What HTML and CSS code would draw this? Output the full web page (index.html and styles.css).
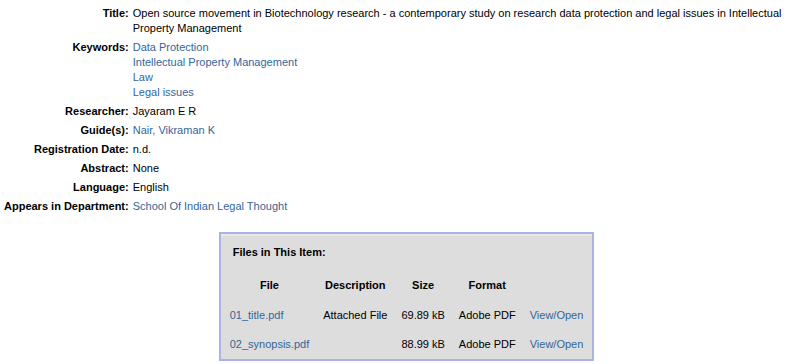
FILE: index.html
```html
<!DOCTYPE html>
<html lang="en">
<head>
    <meta charset="UTF-8">
    <title>Item Record</title>
    <link rel="stylesheet" href="styles.css">
</head>
<body>
    <table class="itemDisplayTable">
        <tr>
            <td class="metadataFieldLabel">Title:</td>
            <td class="metadataFieldValue">Open source movement in Biotechnology research - a contemporary study on research data protection and legal issues in Intellectual Property Management</td>
        </tr>
        <tr>
            <td class="metadataFieldLabel">Keywords:</td>
            <td class="metadataFieldValue">
                <a href="#">Data Protection</a><br>
                <a href="#">Intellectual Property Management</a><br>
                <a href="#">Law</a><br>
                <a href="#">Legal issues</a>
            </td>
        </tr>
        <tr>
            <td class="metadataFieldLabel">Researcher:</td>
            <td class="metadataFieldValue">Jayaram E R</td>
        </tr>
        <tr>
            <td class="metadataFieldLabel">Guide(s):</td>
            <td class="metadataFieldValue"><a href="#">Nair, Vikraman K</a></td>
        </tr>
        <tr>
            <td class="metadataFieldLabel">Registration Date:</td>
            <td class="metadataFieldValue">n.d.</td>
        </tr>
        <tr>
            <td class="metadataFieldLabel">Abstract:</td>
            <td class="metadataFieldValue">None</td>
        </tr>
        <tr>
            <td class="metadataFieldLabel">Language:</td>
            <td class="metadataFieldValue">English</td>
        </tr>
        <tr>
            <td class="metadataFieldLabel">Appears in Department:</td>
            <td class="metadataFieldValue"><a href="#">School Of Indian Legal Thought</a></td>
        </tr>
    </table>

    <table class="panel">
        <tr>
            <td>
                <p class="panelTitle"><strong>Files in This Item:</strong></p>
                <table class="filesTable">
                    <tr>
                        <th>File</th>
                        <th>Description</th>
                        <th>Size</th>
                        <th>Format</th>
                        <th></th>
                    </tr>
                    <tr>
                        <td><a href="#">01_title.pdf</a></td>
                        <td>Attached File</td>
                        <td>69.89 kB</td>
                        <td>Adobe PDF</td>
                        <td><a href="#">View/Open</a></td>
                    </tr>
                    <tr>
                        <td><a href="#">02_synopsis.pdf</a></td>
                        <td></td>
                        <td>88.99 kB</td>
                        <td>Adobe PDF</td>
                        <td><a href="#">View/Open</a></td>
                    </tr>
                </table>
            </td>
        </tr>
    </table>
</body>
</html>
```

FILE: styles.css
```css
body {
    font-family: "Liberation Sans", Arial, sans-serif;
    font-size: 11px;
    line-height: 15px;
    color: #000;
    margin: 0;
    padding: 4px 0 0 2px;
    background-color: #fff;
}
a {
    color: #336699;
    text-decoration: none;
}
.itemDisplayTable {
    border-collapse: collapse;
}
.itemDisplayTable td {
    padding: 2px;
    vertical-align: top;
}
.metadataFieldLabel {
    font-weight: bold;
    text-align: right;
    white-space: nowrap;
}
.panel {
    margin: 16px auto 0;
    background-color: #dddddd;
    border: 2px solid #aab4e2;
    border-spacing: 0;
    box-shadow: inset 0 2px 0 #e9e9e9;
}
.panel > tbody > tr > td {
    padding: 1px 1px 0;
}
.panelTitle {
    margin: 10px 0 10px 11px;
}
.filesTable {
    border-spacing: 2px;
    margin-bottom: -1px;
}
.filesTable th,
.filesTable td {
    padding: 6px;
    white-space: nowrap;
}
.filesTable th {
    font-weight: bold;
    text-align: center;
    padding-bottom: 7px;
}
.filesTable td {
    text-align: left;
}
```
